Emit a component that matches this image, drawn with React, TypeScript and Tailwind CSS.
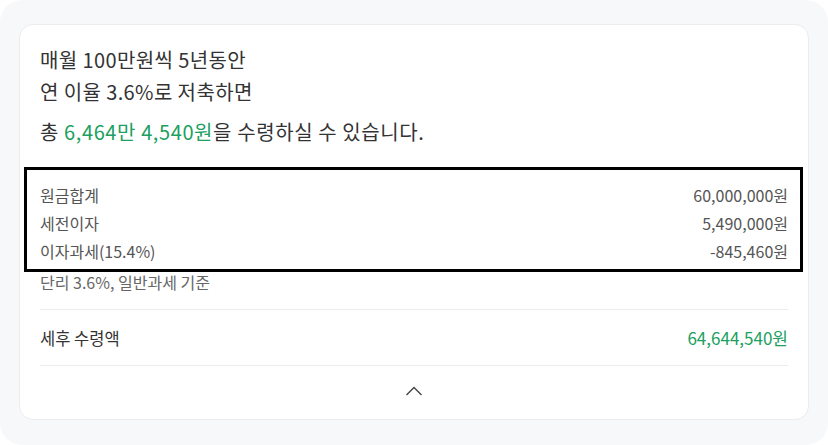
const rows = [
  { label: "원금합계", value: "60,000,000원" },
  { label: "세전이자", value: "5,490,000원" },
  { label: "이자과세(15.4%)", value: "-845,460원" },
];

export default function App() {
  return (
    <div
      className="h-[445px] w-[828px] bg-white"
      style={{ fontFamily: '"Noto Sans CJK KR", "Noto Sans", sans-serif' }}
    >
      <div className="h-full w-full rounded-[22px] bg-[#f7f8fa] px-[19px] pt-[24px]">
        {/* Result card */}
        <div className="h-[396px] rounded-[14px] border border-[#ececef] bg-white px-[20px] pt-[19px]">
          <p className="text-[20px] leading-[32px] tracking-[0.4px] text-[#333]">
            매월 100만원씩 5년동안
            <br />
            연 이율 3.6%로 저축하면
          </p>
          <p className="mt-[8px] text-[20px] leading-[32px] tracking-[0.6px] text-[#333]">
            총 <span className="text-[#20a060]">6,464만 4,540원</span>을 수령하실 수 있습니다.
          </p>

          {/* Breakdown */}
          <div className="relative mt-[33px]">
            {rows.map((r) => (
              <div
                key={r.label}
                className="flex items-center justify-between text-[16px] leading-[28px] text-[#555]"
              >
                <span>{r.label}</span>
                <span>{r.value}</span>
              </div>
            ))}
            <div className="pointer-events-none absolute -bottom-[7px] -left-[16px] -right-[15px] -top-[14px] border-[3px] border-black" />
          </div>
          <p className="mt-[3px] text-[16px] leading-[28px] text-[#666]">단리 3.6%, 일반과세 기준</p>

          <div className="mt-[13px] border-t border-[#ececef]" />
          <div className="flex items-center justify-between py-[13.5px] leading-[28px]">
            <span className="text-[16.5px] text-[#333]">세후 수령액</span>
            <span className="text-[17px] text-[#20a060]">64,644,540원</span>
          </div>
          <div className="border-t border-[#ececef]" />

          <div className="flex justify-center pt-[20px]">
            <svg width="18" height="10" viewBox="0 0 18 10" fill="none">
              <path d="M1.5 9L9 1.5L16.5 9" stroke="#444" strokeWidth="1.4" />
            </svg>
          </div>
        </div>
      </div>
    </div>
  );
}
